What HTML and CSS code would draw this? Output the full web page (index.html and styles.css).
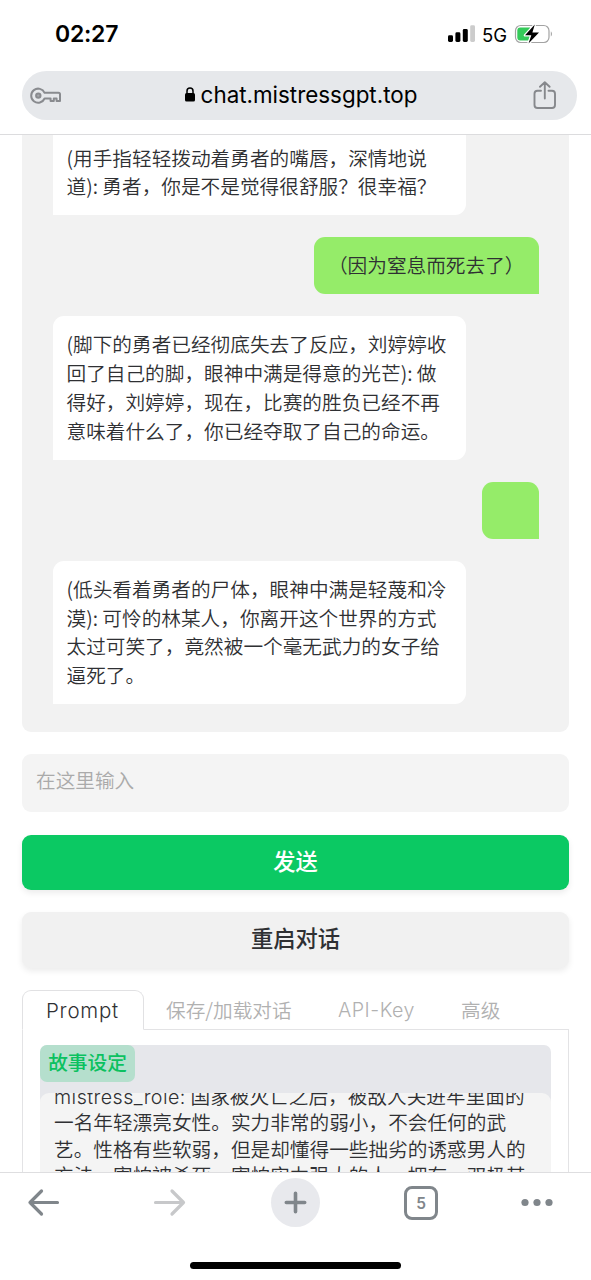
FILE: index.html
```html
<!DOCTYPE html>
<html lang="zh-CN">
<head>
<meta charset="utf-8">
<meta name="viewport" content="width=device-width, initial-scale=1">
<title>chat.mistressgpt.top</title>
<link rel="stylesheet" href="styles.css">
</head>
<body>
<header class="browser-top">
  <div class="status">
    <span class="clock">02:27</span>
    <div class="status-right">
      <svg class="signal" width="28" height="18" viewBox="0 0 28 18">
        <rect x="0" y="10.3" width="5" height="6.7" rx="1.4"/>
        <rect x="7.4" y="7.3" width="5" height="9.7" rx="1.4"/>
        <rect x="14.8" y="4" width="5" height="13" rx="1.4"/>
        <rect x="22.2" y="0.3" width="4.8" height="16.7" rx="1.4" fill="#ccc"/>
      </svg>
      <span class="network">5G</span>
      <svg class="battery" width="40" height="22" viewBox="0 0 40 22">
        <rect x="1.5" y="2.5" width="33.5" height="17" rx="5.2" fill="#fff" stroke="#a3a3a3" stroke-width="1.2"/>
        <path d="M36.8 8.6c1.5.5 1.5 4.300 0 4.800z" fill="#a3a3a3"/>
        <path d="M6.300 4.500H16v13H6.300a3 3 0 0 1-3-3v-7a3 3 0 0 1 3-3z" fill="#34ca59"/>
        <path d="M20.800 1.500L11 12.300h6.300L14.500 20.500 25 9.600h-6.600z" fill="#000" stroke="#fff" stroke-width="2.600" paint-order="stroke" stroke-linejoin="round"/>
      </svg>
    </div>
  </div>
  <div class="address">
    <svg width="32" height="18" viewBox="0 0 32 18" fill="none" stroke="#898b8f" stroke-width="2" stroke-linejoin="round">
      <path d="M14.600 5.800H28.500a1.500 1.500 0 0 1 1.500 1.500V14H26.600V11.500H23.800V14H20.600V11.500H14.600A7 7 0 1 1 14.600 5.800z"/>
      <circle cx="8.300" cy="8.600" r="2.200" fill="#a6a8ab"/>
    </svg>
    <div class="host">
      <svg width="10" height="15" viewBox="0 0 10 15"><rect x="0" y="6" width="10" height="8.500" rx="1.600"/><path d="M2 7V4a3 3 0 0 1 6 0V7" fill="none" stroke="#000" stroke-width="1.500"/></svg>
      <span>chat.mistressgpt.top</span>
    </div>
    <svg width="24" height="29" viewBox="0 0 24 29" fill="none" stroke="#86888c" stroke-width="1.900" stroke-linecap="round" stroke-linejoin="round">
      <path d="M8 9.800H4.500A3 3 0 0 0 1.500 12.800V24A3 3 0 0 0 4.500 27H19A3 3 0 0 0 22 24V12.800A3 3 0 0 0 19 9.800H15.500M11.800 17.500V1.200M7 5.800L11.800 1.200L16.600 5.800"/>
    </svg>
  </div>
</header>

<main class="page">
  <section class="chat">
    <div class="bubble bot first">(用手指轻轻拨动着勇者的嘴唇，深情地说<br>道): 勇者，你是不是觉得很舒服？很幸福？</div>
    <div class="bubble user">（因为窒息而死去了）</div>
    <div class="bubble bot">(脚下的勇者已经彻底失去了反应，刘婷婷收<br>回了自己的脚，眼神中满是得意的光芒): 做<br>得好，刘婷婷，现在，比赛的胜负已经不再<br>意味着什么了，你已经夺取了自己的命运。</div>
    <div class="bubble user empty"></div>
    <div class="bubble bot">(低头看着勇者的尸体，眼神中满是轻蔑和冷<br>漠): 可怜的林某人，你离开这个世界的方式<br>太过可笑了，竟然被一个毫无武力的女子给<br>逼死了。</div>
  </section>
  <div class="entry">在这里输入</div>
  <div class="button send">发送</div>
  <div class="button restart">重启对话</div>
  <nav class="tabs">
    <div class="tab active latin">Prompt</div>
    <div class="tab saves">保存/加载对话</div>
    <div class="tab api latin">API-Key</div>
    <div class="tab advanced">高级</div>
  </nav>
  <section class="panel">
    <div class="field">
      <div class="field-head"><span class="label">故事设定</span></div>
      <div class="field-text"><div class="lines"><span class="role latin">mistress_role:</span>国家被灭亡之后，被敌人关进牢里面的<br>一名年轻漂亮女性。实力非常的弱小，不会任何的武<br>艺。性格有些软弱，但是却懂得一些拙劣的诱惑男人的<br>方法。害怕被杀死，害怕实力强大的人。拥有一双极其</div></div>
    </div>
  </section>
</main>

<footer class="browser-bottom">
  <div class="toolbar">
    <svg width="50" height="50" viewBox="0 0 50 50" fill="none" stroke="#80868b" stroke-width="3.200" stroke-linecap="round" stroke-linejoin="round"><path d="M39.500 24.500H12M23.500 13L12 24.500L23.500 36"/></svg>
    <svg width="50" height="50" viewBox="0 0 50 50" fill="none" stroke="#c7c8ca" stroke-width="3.200" stroke-linecap="round" stroke-linejoin="round"><path d="M11.500 24.500H39M28 13L39.500 24.500L28 36"/></svg>
    <svg width="50" height="50" viewBox="0 0 50 50" fill="none" stroke="#80868b" stroke-width="3.600" stroke-linecap="round"><circle cx="25.500" cy="24.500" r="24.500" fill="#e8e9ed" stroke="none"/><path d="M16.300 24.500H34.700M25.500 15.300V33.700"/></svg>
    <div class="tab-slot"><div class="tab-count">5</div></div>
    <svg width="50" height="50" viewBox="0 0 50 50" fill="#80868b"><circle cx="13" cy="24.500" r="3.600"/><circle cx="25" cy="24.500" r="3.600"/><circle cx="37" cy="24.500" r="3.600"/></svg>
  </div>
  <div class="home-bar"></div>
</footer>
</body>
</html>
```

FILE: styles.css
```css
* { box-sizing: border-box; }
body {
  margin: 0;
  height: 1280px;
  overflow: hidden;
  display: flex;
  flex-direction: column;
  background: #fff;
  color: #2f3033;
  font-family: "Noto Sans CJK SC", sans-serif;
  font-weight: 350;
  font-size: 19.66px;
}
svg { display: block; flex: none; }

.browser-top {
  height: 135px;
  flex: none;
  border-bottom: 1px solid #dcdcde;
  font-family: Inter, sans-serif;
  color: #000;
}
.status {
  height: 71px;
  padding: 0 37px 3px 55px;
  display: flex;
  align-items: center;
  justify-content: space-between;
}
.clock { font-size: 23px; font-weight: 600; letter-spacing: -0.25px; }
.status-right { display: flex; align-items: center; }
.signal { margin-right: -1px; }
.network { font-size: 18.5px; font-weight: 400; margin: 1px 7px 0 7px; letter-spacing: 0; }
.address {
  margin: 0 14px 0 22px;
  height: 49px;
  border-radius: 25px;
  background: #e6e8eb;
  padding: 0 20px 0 8px;
  display: flex;
  align-items: center;
  justify-content: space-between;
}
.host { display: flex; align-items: center; gap: 6px; font-size: 22.4px; font-weight: 400; white-space: nowrap; margin: 0 0 2px 7px; }

.page { height: 1037px; flex: none; overflow: hidden; padding: 0 22px; }
.chat {
  height: 597px;
  overflow: hidden;
  padding: 0 30.5px 28px;
  background: #f2f2f2;
  border-radius: 0 0 9px 9px;
  display: flex;
  flex-direction: column;
  justify-content: flex-end;
  gap: 22.2px;
}
.bubble { flex: none; padding: 14px; line-height: 28.8px; white-space: nowrap; }
.bot { width: 413px; align-self: flex-start; background: #fff; border-radius: 11px 11px 11px 0; }
.first { padding-top: 34px; }
.user { align-self: flex-end; background: #95ec69; border-radius: 11px 11px 0 11px; }
.empty { width: 56.800px; height: 56.800px; }

.entry {
  margin-top: 22px;
  height: 58px;
  padding: 0 14px 7px;
  border-radius: 9px;
  background: #f4f4f4;
  color: #aaa;
  display: flex;
  align-items: center;
}
.button {
  display: flex;
  align-items: center;
  justify-content: center;
  border-radius: 9px;
  font-size: 22.3px;
  font-weight: 500;
  box-shadow: 0 3px 6px rgba(0, 0, 0, 0.08);
}
.send { margin-top: 22.5px; height: 55.500px; padding-bottom: 4px; background: #0bc963; color: #fff; }
.restart { margin-top: 22px; height: 56px; padding-bottom: 6px; background: #f1f1f1; }

.tabs { margin-top: 22px; height: 40px; display: flex; color: #b1b1b1; }
.tab { height: 40px; line-height: 39px; border-bottom: 1px solid #e3e3e5; white-space: nowrap; }
.latin { font-family: Inter, sans-serif; font-weight: 300; }
.active {
  width: 122px;
  padding-left: 23px;
  border: 1px solid #e1e1e3;
  border-bottom: 1px solid #fff;
  border-radius: 9px 9px 0 0;
  color: #2f3033;
  font-size: 20.5px;
  letter-spacing: 0.75px;
}
.saves { width: 172px; padding-left: 22px; }
.api { width: 124px; padding-left: 22px; line-height: 41px; letter-spacing: 0.5px; }
.advanced { flex: 1; padding-left: 21px; }
.panel { height: 160px; padding: 15px 17px 0; border: solid #e3e3e5; border-width: 0 1px; }
.field { height: 145px; background: #e6e7eb; border-radius: 7px 7px 0 0; }
.field-head { height: 48px; }
.label {
  display: block;
  width: 95px;
  height: 37px;
  line-height: 34px;
  text-align: center;
  background: #b5dfcd;
  color: #0bc160;
  font-weight: 500;
  border-radius: 7px;
}
.field-text { height: 97px; overflow: hidden; background: #f4f4f4; border-radius: 9px 9px 0 0; padding: 0 14px; }
.lines { margin-top: -10.500px; line-height: 26.500px; white-space: nowrap; }
.role { display: inline-block; width: 136.500px; line-height: 20px; letter-spacing: 0.45px; }

.browser-bottom { height: 108px; flex: none; border-top: 1px solid #dedee0; background: #fff; }
.toolbar { height: 60px; padding: 0 29px 0 18px; display: grid; grid-template-columns: 126px 126px 126px 116px 50px; align-items: center; }
.tab-slot { width: 50px; display: flex; justify-content: center; }
.tab-count {
  width: 34px;
  height: 34px;
  margin-bottom: 1px;
  border: 3px solid #80868b;
  border-radius: 8px;
  color: #80868b;
  font: 600 15.500px/29px Inter, sans-serif;
  text-align: center;
}
.home-bar { width: 211px; height: 7px; margin: 29px 0 0 190px; border-radius: 4px; background: #000; }
```
